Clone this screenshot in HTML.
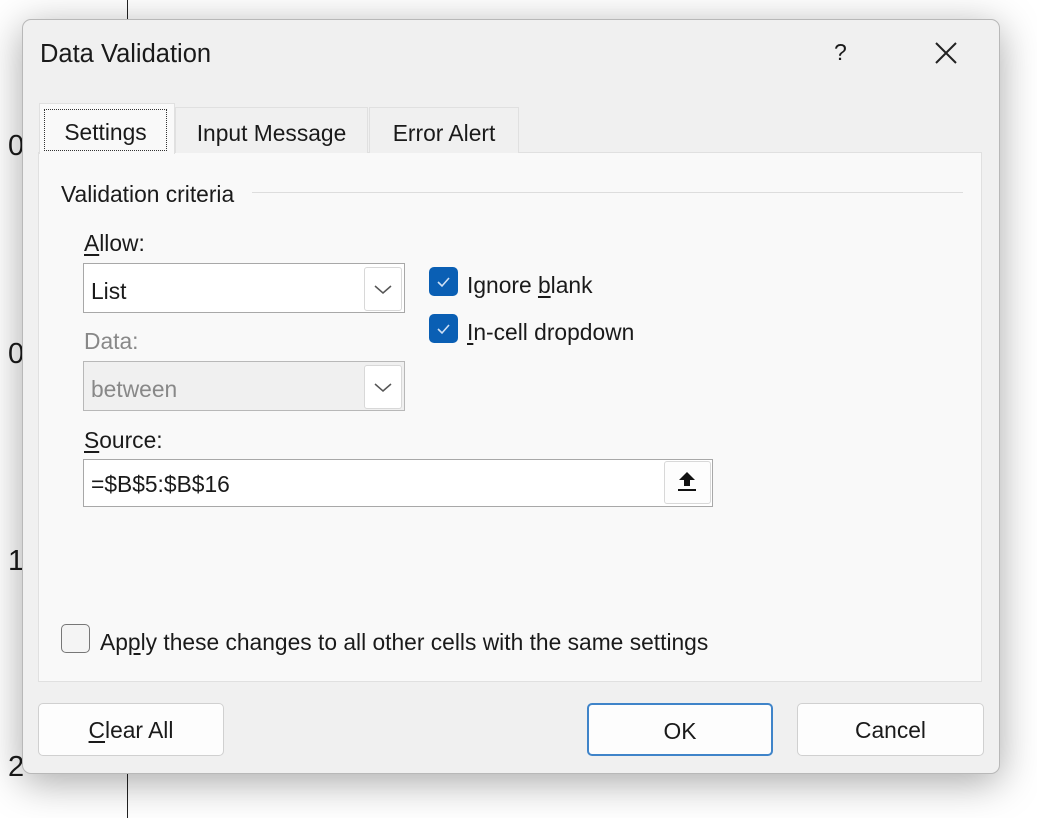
<!DOCTYPE html>
<html><head><meta charset="utf-8"><style>
*{box-sizing:border-box;margin:0;padding:0}
body{width:1037px;height:818px;background:#fff;position:relative;overflow:hidden;font-family:"Liberation Sans",sans-serif;font-size:22.8px;color:#1a1a1a}
.a{position:absolute}
u{text-decoration:underline;text-underline-offset:3px}
.dlg{left:22px;top:19px;width:978px;height:755px;background:#f0f0f0;border:1px solid #b8b8b8;border-radius:9px;box-shadow:0 8px 40px rgba(0,0,0,0.35)}
.btn{background:#fdfdfd;border:1px solid #d0d0d0;border-radius:5px;text-align:center;line-height:53px;height:53px}
.cb{width:29px;height:29px;border-radius:5px;background:#0a5fb4}
.sel{background:#fff;border:1px solid #a8a8a8}
.dd{width:38px;height:44px;border:1px solid #d8d8d8;border-radius:3px;background:#fff}
</style></head><body>
<div class="a" style="left:127px;top:0;width:1px;height:818px;background:#222"></div>
<div class="a" style="left:8px;top:130px;font-size:29px">0</div>
<div class="a" style="left:8px;top:338px;font-size:29px">0</div>
<div class="a" style="left:8px;top:545px;font-size:29px">1</div>
<div class="a" style="left:8px;top:751px;font-size:29px">2</div>
<div class="a dlg"></div>
<div class="a" style="left:40px;top:40px;font-size:25.5px">Data Validation</div>
<div class="a" style="left:834px;top:39px;font-size:23px">?</div>
<svg class="a" style="left:935px;top:42px" width="22" height="22"><path d="M1 1L21 21M21 1L1 21" stroke="#222" stroke-width="2"/></svg>
<div class="a" style="left:38px;top:152px;width:944px;height:530px;background:#f9f9f9;border:1px solid #e0e0e0"></div>
<div class="a" style="left:175px;top:107px;width:193px;height:46px;background:#f0f0f0;border:1px solid #e0e0e0;border-bottom:none;text-align:center;line-height:50px">Input Message</div>
<div class="a" style="left:369px;top:107px;width:150px;height:46px;background:#f0f0f0;border:1px solid #e0e0e0;border-bottom:none;text-align:center;line-height:50px">Error Alert</div>
<div class="a" style="left:39px;top:103px;width:136px;height:51px;background:#f9f9f9;border:1px solid #e0e0e0;border-bottom:none"></div>
<div class="a" style="left:44px;top:109px;width:123px;height:42px;border:1px dotted #333;text-align:center;line-height:44px">Settings</div>
<div class="a" style="left:61px;top:181px">Validation criteria</div>
<div class="a" style="left:252px;top:192px;width:711px;height:1px;background:#ddd"></div>
<div class="a" style="left:84px;top:230px"><u>A</u>llow:</div>
<div class="a sel" style="left:83px;top:263px;width:322px;height:50px"></div>
<div class="a" style="left:91px;top:278px">List</div>
<div class="a dd" style="left:364px;top:267px"></div>
<svg class="a" style="left:373px;top:284px" width="20" height="12"><path d="M2 2L10 9L18 2" stroke="#555" fill="none" stroke-width="1.5"/></svg>
<div class="a" style="left:84px;top:328px;color:#888">Data:</div>
<div class="a" style="left:83px;top:361px;width:322px;height:50px;background:#f0f0f0;border:1px solid #b8b8b8"></div>
<div class="a" style="left:91px;top:376px;color:#888">between</div>
<div class="a dd" style="left:364px;top:365px"></div>
<svg class="a" style="left:373px;top:382px" width="20" height="12"><path d="M2 2L10 9L18 2" stroke="#555" fill="none" stroke-width="1.5"/></svg>
<div class="a cb" style="left:429px;top:267px"></div>
<svg class="a" style="left:429px;top:267px" width="29" height="29"><path d="M9 15L13 19L20 11" stroke="#cfe0f5" fill="none" stroke-width="1.6"/></svg>
<div class="a" style="left:467px;top:272px">Ignore <u>b</u>lank</div>
<div class="a cb" style="left:429px;top:314px"></div>
<svg class="a" style="left:429px;top:314px" width="29" height="29"><path d="M9 15L13 19L20 11" stroke="#cfe0f5" fill="none" stroke-width="1.6"/></svg>
<div class="a" style="left:467px;top:319px"><u>I</u>n-cell dropdown</div>
<div class="a" style="left:84px;top:427px"><u>S</u>ource:</div>
<div class="a sel" style="left:83px;top:459px;width:630px;height:48px"></div>
<div class="a" style="left:91px;top:471px">=$B$5:$B$16</div>
<div class="a" style="left:664px;top:461px;width:47px;height:43px;background:#fdfdfd;border:1px solid #d8d8d8;border-radius:3px"></div>
<svg class="a" style="left:675px;top:469px" width="24" height="24"><path d="M12 3L4 11H9V17H15V11H20Z" fill="#111"/><rect x="3" y="20" width="18" height="2" fill="#111"/></svg>
<div class="a" style="left:61px;top:624px;width:29px;height:29px;border:1px solid #777;border-radius:5px;background:#f4f4f4"></div>
<div class="a" style="left:100px;top:629px">Ap<u>p</u>ly these changes to all other cells with the same settings</div>
<div class="a btn" style="left:38px;top:703px;width:186px"><u>C</u>lear All</div>
<div class="a btn" style="left:587px;top:703px;width:186px;border:2px solid #3f84c9">OK</div>
<div class="a btn" style="left:797px;top:703px;width:187px">Cancel</div>
</body></html>
